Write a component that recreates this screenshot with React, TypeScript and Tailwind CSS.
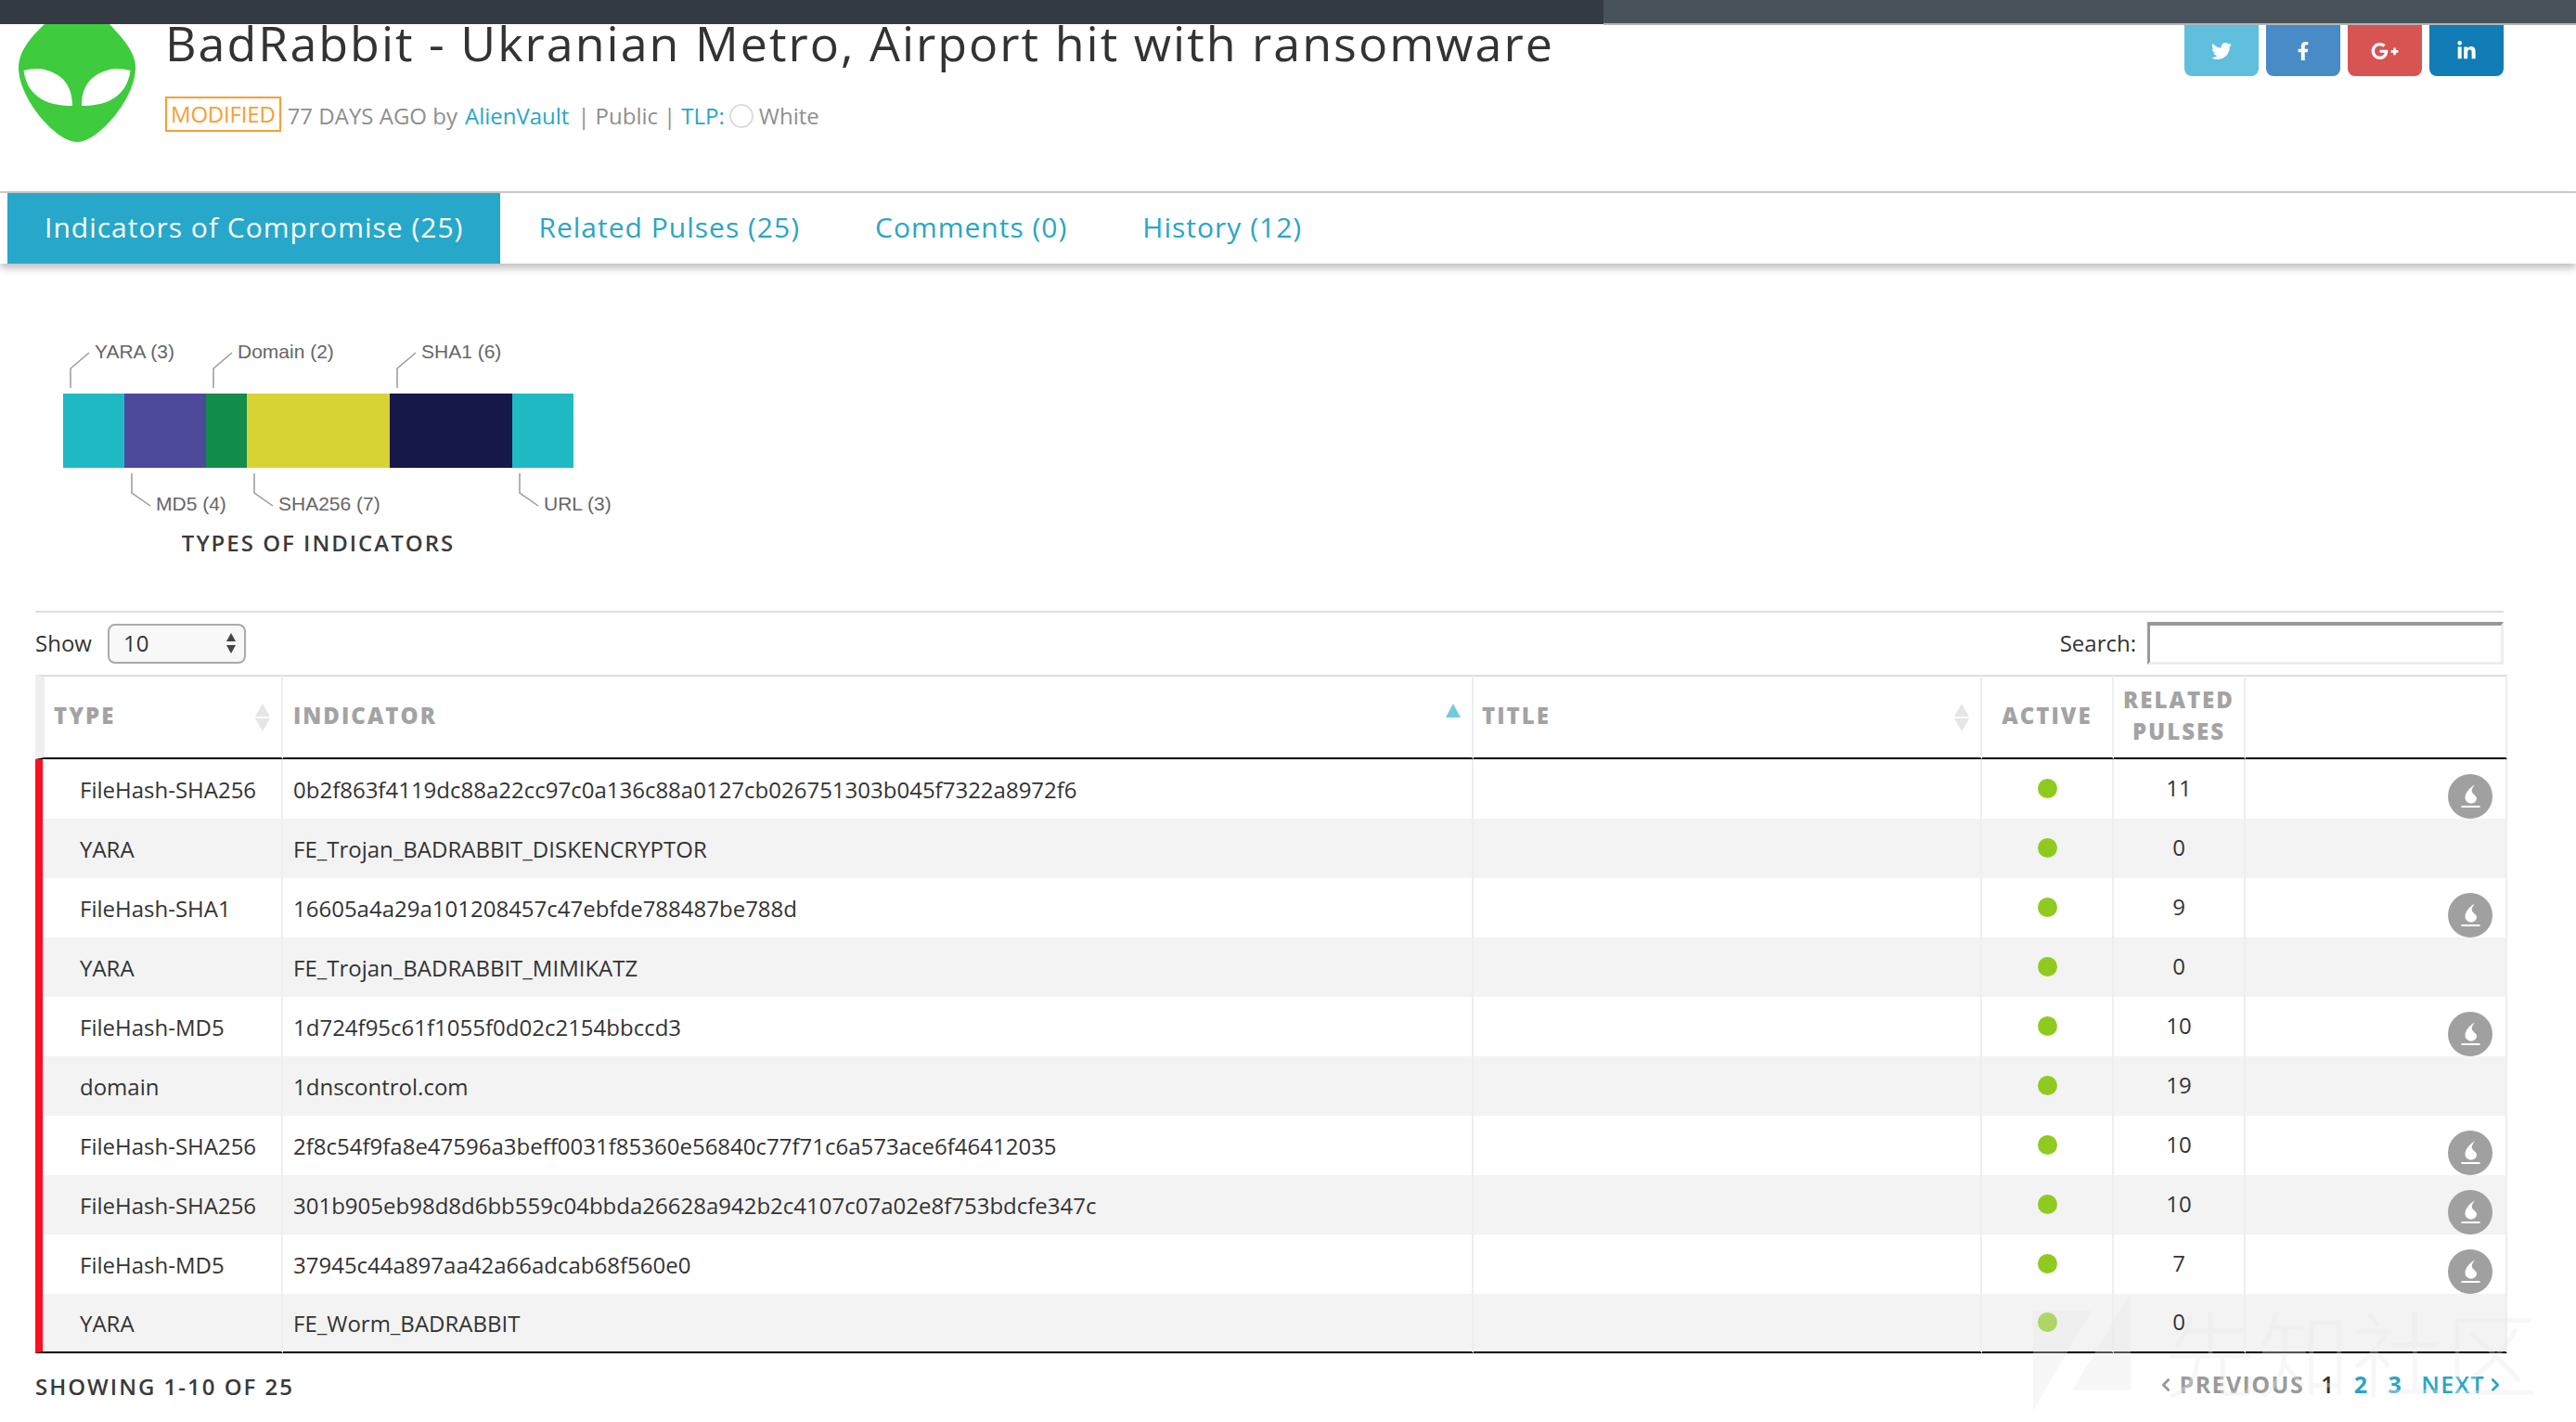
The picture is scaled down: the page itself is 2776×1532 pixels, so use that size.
import { FaTwitter, FaFacebookF, FaGooglePlusG, FaLinkedinIn } from 'react-icons/fa';
import { ChevronLeft, ChevronRight } from 'lucide-react';

const rows = [
  { type: 'FileHash-SHA256', indicator: '0b2f863f4119dc88a22cc97c0a136c88a0127cb026751303b045f7322a8972f6', pulses: 11, flame: true },
  { type: 'YARA', indicator: 'FE_Trojan_BADRABBIT_DISKENCRYPTOR', pulses: 0, flame: false },
  { type: 'FileHash-SHA1', indicator: '16605a4a29a101208457c47ebfde788487be788d', pulses: 9, flame: true },
  { type: 'YARA', indicator: 'FE_Trojan_BADRABBIT_MIMIKATZ', pulses: 0, flame: false },
  { type: 'FileHash-MD5', indicator: '1d724f95c61f1055f0d02c2154bbccd3', pulses: 10, flame: true },
  { type: 'domain', indicator: '1dnscontrol.com', pulses: 19, flame: false },
  { type: 'FileHash-SHA256', indicator: '2f8c54f9fa8e47596a3beff0031f85360e56840c77f71c6a573ace6f46412035', pulses: 10, flame: true },
  { type: 'FileHash-SHA256', indicator: '301b905eb98d8d6bb559c04bbda26628a942b2c4107c07a02e8f753bdcfe347c', pulses: 10, flame: true },
  { type: 'FileHash-MD5', indicator: '37945c44a897aa42a66adcab68f560e0', pulses: 7, flame: true },
  { type: 'YARA', indicator: 'FE_Worm_BADRABBIT', pulses: 0, flame: false },
];

const segments = [
  { x: 68, w: 66, fill: '#1fbac4' },
  { x: 134, w: 88, fill: '#4d4a9c' },
  { x: 222, w: 44, fill: '#138e4a' },
  { x: 266, w: 154, fill: '#d8d335' },
  { x: 420, w: 132, fill: '#161849' },
  { x: 552, w: 66, fill: '#1fbac4' },
];

const topLabels = [
  { x: 76, text: 'YARA (3)' },
  { x: 230, text: 'Domain (2)' },
  { x: 428, text: 'SHA1 (6)' },
];

const bottomLabels = [
  { x: 142, text: 'MD5 (4)' },
  { x: 274, text: 'SHA256 (7)' },
  { x: 560, text: 'URL (3)' },
];

function AlienLogo() {
  return (
    <svg width="126" height="127" viewBox="0 0 126 127" className="block">
      <path d="M28 0C12 15 0 30 0 47C0 80 40 127 63 127C86 127 126 80 126 47C126 30 112 15 98 0Z" fill="#3ecb3e" />
      <path d="M5.5 50C14 48 24 47 31 50C45 54 58 64 58 88C36 88 10 82 5.5 50Z" fill="#fff" />
      <path d="M120.5 50C112 48 102 47 95 50C81 54 68 64 68 88C90 88 116 82 120.5 50Z" fill="#fff" />
    </svg>
  );
}

function SortArrows() {
  return (
    <svg width="16" height="30" viewBox="0 0 16 30" className="block">
      <path d="M8 0L16 14H0Z" fill="#e6e6e6" />
      <path d="M8 30L16 16H0Z" fill="#e6e6e6" />
    </svg>
  );
}

function FlameButton() {
  return (
    <div className="flex justify-end pr-[14px]">
      <div className="w-[48px] h-[48px] rounded-full bg-[#a0a0a0]">
        <svg width="48" height="48" viewBox="0 0 48 48" className="block">
          <path d="M29 11.5C24 14 18.5 20 18.5 25.5C18.5 29 21.5 31.5 25 31.5C28.5 31.5 31 29 31 26C31 23.5 27 22 25.8 19C25.2 17 27 13.5 29 11.5Z" fill="#fff" />
          <rect x="14.5" y="34" width="20" height="2" fill="#fff" />
        </svg>
      </div>
    </div>
  );
}

export default function App() {
  const socials = [
    { icon: FaTwitter, bg: 'bg-[#5fbfdd]', size: 22 },
    { icon: FaFacebookF, bg: 'bg-[#488bc6]', size: 20 },
    { icon: FaGooglePlusG, bg: 'bg-[#d75453]', size: 30 },
    { icon: FaLinkedinIn, bg: 'bg-[#117cb5]', size: 22 },
  ];

  return (
    <div className="relative w-[2776px] h-[1532px] overflow-hidden bg-white font-['Open_Sans',sans-serif] text-[#333]">
      {/* Top bar */}
      <div className="flex h-[27px]">
        <div className="w-[1728px] h-[26px] bg-[#343a42]" />
        <div className="flex-1 h-[27px] bg-[#48525a] border-b-2 border-[#b5b5b5]" />
      </div>

      {/* Pulse header */}
      <div className="flex justify-between h-[179px] pl-[20px] pr-[78px]">
        <div className="flex">
          <div className="-mt-[1px]">
            <AlienLogo />
          </div>
          <div className="ml-[32px]">
            <h1 className="h-[40px] -mt-[1px] text-[52px] leading-[40px] tracking-[2px] font-normal text-[#333] whitespace-nowrap">
              BadRabbit - Ukranian Metro, Airport hit with ransomware
            </h1>
            <div className="flex items-center h-[38px] mt-[38px] text-[24px] text-[#8f8f8f] whitespace-nowrap">
              <span className="flex items-center h-[38px] px-[4px] border-2 border-[#f7a033] text-[#f7a033] tracking-[-0.2px]">MODIFIED</span>
              <div className="flex items-center pt-[3px]">
                <span className="ml-[7px]">77 DAYS AGO by</span>
                <span className="ml-[8px] text-[#2aa5c7]">AlienVault</span>
                <span className="ml-[9px]">|</span>
                <span className="ml-[6px]">Public</span>
                <span className="ml-[6px]">|</span>
                <span className="ml-[6px] text-[#2aa5c7]">TLP:</span>
                <span className="ml-[5px] w-[26px] h-[26px] rounded-full border-2 border-[#dcdcdc]" />
                <span className="ml-[6px]">White</span>
              </div>
            </div>
          </div>
        </div>
        <div className="flex gap-[8px] h-[55px]">
          {socials.map(({ icon: Icon, bg, size }) => (
            <div key={bg} className={`flex items-center justify-center w-[80px] rounded-b-[8px] text-white ${bg}`}>
              <Icon size={size} />
            </div>
          ))}
        </div>
      </div>

      {/* Tabs */}
      <div className="flex h-[78px] pl-[8px] border-t-2 border-[#c8c8c8] shadow-[0_5px_8px_rgba(0,0,0,0.25)] text-[30px] tracking-[1px] whitespace-nowrap">
        <div className="flex items-center h-[76px] pb-[3px] px-[40px] bg-[#27a7c9] text-white">Indicators of Compromise (25)</div>
        <div className="flex items-center pb-[3px] pl-[41px] pr-[40px] text-[#2aa5c7]">Related Pulses (25)</div>
        <div className="flex items-center pb-[3px] pl-[41px] pr-[40px] text-[#2aa5c7]">Comments (0)</div>
        <div className="flex items-center pb-[3px] pl-[41px] pr-[40px] text-[#2aa5c7]">History (12)</div>
      </div>

      {/* Types of indicators chart */}
      <svg width="700" height="200" viewBox="0 360 700 200" className="block mt-[76px]">
        {segments.map((s) => (
          <rect key={s.x} x={s.x} y="424" width={s.w} height="80" fill={s.fill} />
        ))}
        {topLabels.map((l) => (
          <g key={l.text}>
            <path d={`M${l.x} 418V397L${l.x + 20} 380`} fill="none" stroke="#999" strokeWidth="1.5" />
            <text x={l.x + 26} y="386" fontFamily="Liberation Sans, sans-serif" fontSize="21" fill="#666">{l.text}</text>
          </g>
        ))}
        {bottomLabels.map((l) => (
          <g key={l.text}>
            <path d={`M${l.x} 510V531L${l.x + 20} 545`} fill="none" stroke="#999" strokeWidth="1.5" />
            <text x={l.x + 26} y="550" fontFamily="Liberation Sans, sans-serif" fontSize="21" fill="#666">{l.text}</text>
          </g>
        ))}
      </svg>
      <div className="w-[686px] h-[50px] text-center text-[24px] leading-[50px] font-semibold tracking-[2px] text-[#3a3a3a]">
        TYPES OF INDICATORS
      </div>

      <div className="ml-[38px] w-[2660px] h-[2px] mt-[48px] bg-[#dedede]" />

      {/* Show / search */}
      <div className="flex items-center justify-between ml-[38px] w-[2660px] h-[46px] mt-[10px] text-[24px]">
        <div className="flex items-center">
          <span>Show</span>
          <div className="flex items-center justify-between w-[149px] h-[43px] ml-[17px] pl-[15px] pr-[9px] rounded-[8px] border-2 border-[#aaa] bg-[#f8f8f8]">
            <span>10</span>
            <svg width="10" height="24" viewBox="0 0 10 24" className="block">
              <path d="M5 1L10 10H0Z" fill="#444" />
              <path d="M5 23L10 14H0Z" fill="#444" />
            </svg>
          </div>
        </div>
        <div className="flex items-center">
          <label className="mr-[12px]">Search:</label>
          <input
            type="text"
            className="block w-[384px] h-[46px] outline-none border-[3px] border-t-[4px] border-l-[3px] border-t-[#999] border-l-[#999] border-r-[#eee] border-b-[#eee]"
          />
        </div>
      </div>

      {/* Indicators table */}
      <table className="ml-[38px] mt-[11px] w-[2664px] table-fixed border-separate border-spacing-0 text-[24px]">
        <colgroup>
          <col className="w-[267px]" />
          <col className="w-[1283px]" />
          <col className="w-[548px]" />
          <col className="w-[142px]" />
          <col className="w-[142px]" />
          <col className="w-[282px]" />
        </colgroup>
        <thead>
          <tr className="h-[91px] text-[24px] font-extrabold tracking-[2px] text-[#a3a3a3] leading-[34px]">
            <th className="pl-[10px] pr-[12px] font-extrabold text-left border-t-2 border-b-2 border-r-2 border-l-[10px] border-t-[#ddd] border-b-black border-r-[#eee] border-l-[#eee]">
              <div className="flex items-center justify-between">
                <span className="-mt-[3px]">TYPE</span>
                <SortArrows />
              </div>
            </th>
            <th className="pl-[11px] pr-[12px] font-extrabold text-left border-t-2 border-b-2 border-r-2 border-t-[#ddd] border-b-black border-r-[#eee]">
              <div className="flex items-center justify-between">
                <span className="-mt-[3px]">INDICATOR</span>
                <svg width="16" height="15" viewBox="0 0 16 15" className="block -mt-[15px]">
                  <path d="M8 0L16 15H0Z" fill="#6fcbe0" />
                </svg>
              </div>
            </th>
            <th className="pl-[9px] pr-[12px] font-extrabold text-left border-t-2 border-b-2 border-r-2 border-t-[#ddd] border-b-black border-r-[#eee]">
              <div className="flex items-center justify-between">
                <span className="-mt-[3px]">TITLE</span>
                <SortArrows />
              </div>
            </th>
            <th className="pb-[3px] font-extrabold text-center border-t-2 border-b-2 border-r-2 border-t-[#ddd] border-b-black border-r-[#eee]">ACTIVE</th>
            <th className="pb-[3px] font-extrabold text-center border-t-2 border-b-2 border-r-2 border-t-[#ddd] border-b-black border-r-[#eee]">
              RELATED
              <br />
              PULSES
            </th>
            <th className="border-t-2 border-b-2 border-r-2 border-t-[#ddd] border-b-black border-r-[#eee]" />
          </tr>
        </thead>
        <tbody>
          {rows.map((r, i) => {
            const last = i === rows.length - 1;
            const bottom = last ? 'border-b-2 border-b-black' : '';
            return (
              <tr key={r.indicator} className={i % 2 === 1 ? 'bg-[#f3f3f3]' : 'bg-white'}>
                <td className={`h-[64px] pl-[40px] pt-[2px] border-l-[8px] border-l-[#ff0d20] border-r-2 border-r-[#eee] whitespace-nowrap ${bottom}`}>{r.type}</td>
                <td className={`pl-[11px] pt-[2px] border-r-2 border-r-[#eee] whitespace-nowrap ${bottom}`}>{r.indicator}</td>
                <td className={`border-r-2 border-r-[#eee] ${bottom}`} />
                <td className={`border-r-2 border-r-[#eee] ${bottom}`}>
                  <div className="w-[21px] h-[21px] mx-auto mb-[2px] rounded-full bg-[#8fcb1f]" />
                </td>
                <td className={`pb-[2px] text-center border-r-2 border-r-[#eee] ${bottom}`}>{r.pulses}</td>
                <td className={`p-0 align-bottom border-r-2 border-r-[#eee] ${bottom}`}>{r.flame && <FlameButton />}</td>
              </tr>
            );
          })}
        </tbody>
      </table>

      {/* Footer */}
      <div className="flex justify-between ml-[38px] w-[2662px] h-[40px] mt-[16px] whitespace-nowrap">
        <span className="text-[24px] leading-[40px] font-semibold tracking-[2px] text-[#3a3a3a]">SHOWING 1-10 OF 25</span>
        <div className="flex items-center -mt-[4px] text-[25px] font-bold tracking-[1.4px]">
          <ChevronLeft size={22} className="mr-[4px] text-[#9a9a9a]" strokeWidth={3} />
          <span className="text-[#9a9a9a]">PREVIOUS</span>
          <span className="ml-[18px] font-semibold text-[#333]">1</span>
          <span className="ml-[20px] text-[#2aa5c7]">2</span>
          <span className="ml-[21px] text-[#2aa5c7]">3</span>
          <span className="ml-[20px] font-semibold text-[#2aa5c7]">NEXT</span>
          <ChevronRight size={22} className="text-[#2aa5c7]" strokeWidth={3} />
        </div>
      </div>

      {/* Watermark */}
      <svg width="110" height="130" viewBox="0 0 110 130" className="absolute left-[2188px] top-[1391px] pointer-events-none">
        <path d="M3 21H66L3 129Z" fill="rgba(232,232,232,0.35)" />
        <path d="M108 2V107H45Z" fill="rgba(232,232,232,0.35)" />
      </svg>
      <div className="absolute left-[2332px] top-[1395px] text-[100px] leading-[120px] tracking-[1px] font-light text-[rgba(232,232,232,0.35)] pointer-events-none whitespace-nowrap font-['Noto_Sans_CJK_SC',sans-serif]">
        先知社区
      </div>
    </div>
  );
}
